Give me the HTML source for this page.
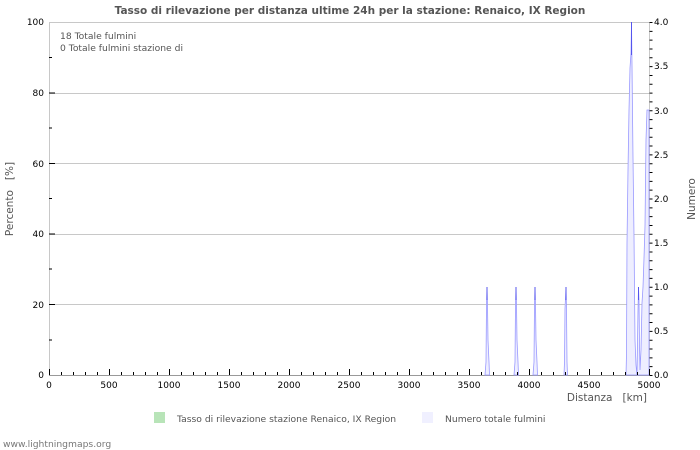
<!DOCTYPE html>
<html><head><meta charset="utf-8"><style>
body{margin:0;background:#fff;}
svg{display:block;font-family:"DejaVu Sans","Liberation Sans",sans-serif;}
</style></head><body>
<svg width="700" height="450" viewBox="0 0 700 450" xmlns="http://www.w3.org/2000/svg">
<rect width="700" height="450" fill="#fff"/>
<text x="350" y="14" text-anchor="middle" font-size="10.5" font-weight="bold" fill="#555">Tasso di rilevazione per distanza ultime 24h per la stazione: Renaico, IX Region</text>
<g stroke="#c8c8c8" stroke-width="1">
<line x1="49" y1="22.5" x2="649" y2="22.5"/>
<line x1="49" y1="93.5" x2="649" y2="93.5"/>
<line x1="49" y1="163.5" x2="649" y2="163.5"/>
<line x1="49" y1="234.5" x2="649" y2="234.5"/>
<line x1="49" y1="304.5" x2="649" y2="304.5"/>
<line x1="49.5" y1="22" x2="49.5" y2="375"/>
<line x1="649.5" y1="22" x2="649.5" y2="375"/>
</g>
<line x1="49" y1="375.5" x2="650" y2="375.5" stroke="#999"/>
<g fill="#eeeeff" stroke="#9999ff" stroke-width="0.8">
<polygon points="485,375 486,362 486.5,305 487,287 487.5,305 488,340 489,362 489.5,375"/>
<polygon points="514,375 515,362 515.5,305 516,287 516.5,305 517,340 518,362 518.5,375"/>
<polygon points="533,375 534,362 534.5,305 535,287 535.5,305 536,340 537,362 537.5,375"/>
<polygon points="564,375 564.5,362 565,309 566,287 566.5,309 567,362 567.5,375"/>
<polygon points="626,375 626.5,354 627,243 628,170 629,110 630,68 631,53 631.5,22 632,65 633,158 634,236 635,340 636,365 637,375 638,310 638.5,287 639,300 639.5,345 640,370 641,350 642,303 643,287 644,258 645,226 646,140 647,110 649,110 649,375"/>
</g>
<line x1="631.5" y1="22" x2="631.5" y2="55" stroke="#5555ee"/>
<line x1="487" y1="287" x2="487" y2="300" stroke="#5555ee"/>
<line x1="516" y1="287" x2="516" y2="300" stroke="#5555ee"/>
<line x1="535" y1="287" x2="535" y2="300" stroke="#5555ee"/>
<line x1="566" y1="287" x2="566" y2="300" stroke="#5555ee"/>
<line x1="638.5" y1="287" x2="638.5" y2="300" stroke="#5555ee"/>
<line x1="49" y1="373.5" x2="650" y2="373.5" stroke="#000" stroke-dasharray="1 11" stroke-width="3"/>
<line x1="49" y1="372" x2="650" y2="372" stroke="#000" stroke-dasharray="1 59" stroke-width="6"/>
<g stroke="#000">
<line x1="49" y1="340" x2="52" y2="340"/><line x1="49" y1="269" x2="52" y2="269"/><line x1="49" y1="198.5" x2="52" y2="198.5"/><line x1="49" y1="128" x2="52" y2="128"/><line x1="49" y1="57.5" x2="52" y2="57.5"/>
<line x1="49" y1="304.5" x2="55" y2="304.5"/><line x1="49" y1="234" x2="55" y2="234"/><line x1="49" y1="163.5" x2="55" y2="163.5"/><line x1="49" y1="93" x2="55" y2="93"/>
</g>
<line x1="651" y1="22" x2="651" y2="376" stroke="#000" stroke-width="3" stroke-dasharray="1 7.825"/>
<g font-size="9" fill="#000">
<text x="44" y="25" text-anchor="end">100</text>
<text x="44" y="96" text-anchor="end">80</text>
<text x="44" y="167" text-anchor="end">60</text>
<text x="44" y="237" text-anchor="end">40</text>
<text x="44" y="308" text-anchor="end">20</text>
<text x="44" y="378" text-anchor="end">0</text>
<text x="49" y="388" text-anchor="middle">0</text>
<text x="109" y="388" text-anchor="middle">500</text>
<text x="169" y="388" text-anchor="middle">1000</text>
<text x="229" y="388" text-anchor="middle">1500</text>
<text x="289" y="388" text-anchor="middle">2000</text>
<text x="349" y="388" text-anchor="middle">2500</text>
<text x="409" y="388" text-anchor="middle">3000</text>
<text x="469" y="388" text-anchor="middle">3500</text>
<text x="529" y="388" text-anchor="middle">4000</text>
<text x="589" y="388" text-anchor="middle">4500</text>
<text x="649" y="388" text-anchor="middle">5000</text>
<text x="654" y="25">4.0</text>
<text x="654" y="69">3.5</text>
<text x="654" y="114">3.0</text>
<text x="654" y="158">2.5</text>
<text x="654" y="202">2.0</text>
<text x="654" y="246">1.5</text>
<text x="654" y="290">1.0</text>
<text x="654" y="334">0.5</text>
<text x="654" y="378">0.0</text>
</g>
<g font-size="9.2" fill="#555">
<text x="60" y="39">18 Totale fulmini</text>
<text x="60" y="51">0 Totale fulmini stazione di</text>
<text x="647" y="401" text-anchor="end" font-size="10.5" xml:space="preserve">Distanza   [km]</text>
<text transform="translate(13,199) rotate(-90)" text-anchor="middle" font-size="10.5" xml:space="preserve">Percento   [%]</text>
<text transform="translate(695,199) rotate(-90)" text-anchor="middle" font-size="10.5">Numero</text>
<text x="177" y="422">Tasso di rilevazione stazione Renaico, IX Region</text>
<text x="445" y="422">Numero totale fulmini</text>
<text x="3" y="447" fill="#777">www.lightningmaps.org</text>
</g>
<rect x="154" y="412" width="11" height="11" fill="#b8e4b8"/>
<rect x="422" y="412" width="11" height="11" fill="#f0f0ff"/>
</svg>
</body></html>
